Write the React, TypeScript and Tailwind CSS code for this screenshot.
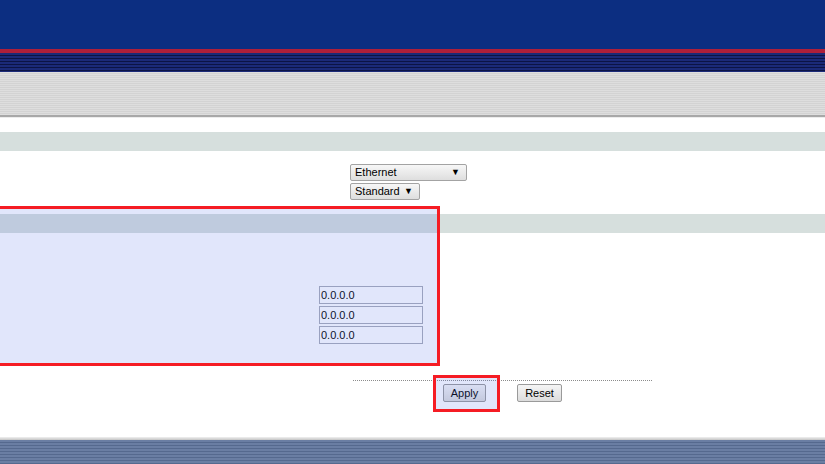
import React from 'react';

const Select: React.FC<{ label: string; width: string }> = ({ label, width }) => (
  <div
    className={`flex h-[17px] ${width} items-center justify-between rounded-[2px] border border-[#a3a3a3] bg-[linear-gradient(to_bottom,#f7f7f7,#dedede)] pl-[4px] pr-[6px] text-[11px] leading-none text-black`}
  >
    <span>{label}</span>
    <span className="text-[9px]">▼</span>
  </div>
);

const IpField: React.FC = () => (
  <div className="flex h-[18px] w-[104px] items-center border border-[#a9acb8] bg-white pl-[1px] text-[11px] leading-none text-black">
    0.0.0.0
  </div>
);

const App: React.FC = () => {
  return (
    <div className="relative h-[464px] w-[825px] overflow-hidden bg-white font-['Liberation_Sans',Arial,sans-serif]">
      {/* header */}
      <div className="h-[49px] bg-[#0c2e81]" />
      <div className="h-[4px] bg-[#ae1f3a]" />
      <div className="h-[19px] bg-[repeating-linear-gradient(to_bottom,#1b2a78_0px,#1b2a78_2px,#0c1445_2px,#0c1445_3px)]" />
      <div className="h-[43px] bg-[repeating-linear-gradient(to_bottom,#dedede_0px,#dedede_1px,#d3d3d3_1px,#d3d3d3_2px)]" />
      <div className="h-[2px] bg-[#a8a8a8]" />
      <div className="h-[1px] bg-[#ececec]" />

      {/* interface section */}
      <div className="mt-[14px] h-[19px] bg-[#d6dfdd]" />
      <div className="flex flex-col gap-[2px] pl-[350px] pt-[13px]">
        <Select label="Ethernet" width="w-[117px]" />
        <Select label="Standard" width="w-[70px]" />
      </div>

      {/* address section */}
      <div className="mt-[14px] h-[19px] bg-[#d6dfdd]" />
      <div className="flex flex-col gap-[2px] pl-[319px] pt-[53px]">
        <IpField />
        <IpField />
        <IpField />
      </div>

      {/* actions */}
      <div className="ml-[353px] mt-[36px] w-[299px] border-t border-dotted border-[#8c8c8c]" />
      <div className="mt-[3px] flex gap-[31px] pl-[443px]">
        <button className="flex h-[18px] w-[43px] items-center justify-center rounded-[2px] border border-[#9a9a9a] bg-[linear-gradient(to_bottom,#f5f5f5,#dcdcdc)] text-[11px] leading-none text-black">
          Apply
        </button>
        <button className="flex h-[18px] w-[45px] items-center justify-center rounded-[2px] border border-[#9a9a9a] bg-[linear-gradient(to_bottom,#f5f5f5,#dcdcdc)] text-[11px] leading-none text-black">
          Reset
        </button>
      </div>

      {/* footer */}
      <div className="absolute bottom-0 left-0 right-0">
        <div className="h-[3px] bg-[linear-gradient(to_bottom,#f0f0f0,#c4c4c4)]" />
        <div className="h-[24px] bg-[repeating-linear-gradient(to_bottom,#6a7ea3_0px,#6a7ea3_2px,#55698e_2px,#55698e_3px)]" />
      </div>

      {/* highlight overlays */}
      <div className="pointer-events-none absolute left-[-10px] top-[206px] h-[160px] w-[450px] border-[3px] border-[#f51c24] bg-[rgba(80,109,232,0.17)]" />
      <div className="pointer-events-none absolute left-[433px] top-[375px] h-[37px] w-[67px] border-[3px] border-[#f51c24] bg-[rgba(80,109,232,0.17)]" />
    </div>
  );
};

export default App;
